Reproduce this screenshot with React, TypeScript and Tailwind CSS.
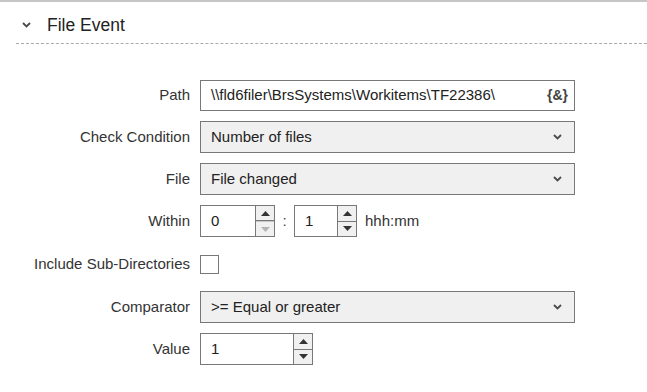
import { ReactNode } from "react";

function Chevron({ className = "" }: { className?: string }) {
  return (
    <svg width="9" height="6" viewBox="0 0 9 6" className={className}>
      <polyline points="1,1 4.5,4.5 8,1" fill="none" stroke="#4a4a4a" strokeWidth="1.8" />
    </svg>
  );
}

function Row({ label, children, tall }: { label: string; children: ReactNode; tall?: boolean }) {
  return (
    <div className={`flex items-center ${tall ? "h-[34px]" : "h-[32px]"}`}>
      <label className="w-[190px] text-right text-[15px] text-[#333]">{label}</label>
      <div className="ml-[10px] flex items-center">{children}</div>
    </div>
  );
}

function Select({ value }: { value: string }) {
  return (
    <div className="flex h-[32px] w-[375px] items-center justify-between border border-[#787878] bg-[#f0f0f0] pl-[10px] pr-[12px] text-[15px] text-[#222]">
      <span className="pt-px">{value}</span>
      <Chevron />
    </div>
  );
}

function Arrow({ up, muted }: { up?: boolean; muted?: boolean }) {
  return (
    <svg width="9" height="5" viewBox="0 0 9 5">
      <polygon points={up ? "0,5 4.5,0 9,5" : "0,0 4.5,5 9,0"} fill={muted ? "#b4b4b4" : "#333"} />
    </svg>
  );
}

function NumberBox({ value, width, downMuted }: { value: string; width: string; downMuted?: boolean }) {
  return (
    <div className={`flex h-[32px] border border-[#787878] bg-white ${width}`}>
      <span className="flex flex-1 items-center pl-[10px] text-[15px] text-[#222]">{value}</span>
      <div className="flex w-[19px] flex-col border-l border-[#787878] bg-[#f0f0f0]">
        <div className="flex flex-1 items-center justify-center border-b border-[#787878]">
          <Arrow up />
        </div>
        <div className={`flex flex-1 items-center justify-center ${downMuted ? "border-t border-[#c8c8c8]" : ""}`}>
          <Arrow muted={downMuted} />
        </div>
      </div>
    </div>
  );
}

export default function App() {
  return (
    <div className="h-[392px] w-[647px] overflow-hidden border-t-2 border-[#c6c6c6] bg-white font-['Liberation_Sans',Arial,sans-serif]">
      <div className="ml-4 flex h-[42px] items-center border-b border-dashed border-[#ababab] pt-[5px]">
        <Chevron className="ml-[6px]" />
        <h2 className="ml-4 text-[17.5px] text-[#222]">File Event</h2>
      </div>

      <div className="mt-[35px] flex flex-col gap-[10px]">
        <Row label="Path">
          <div className="flex h-[31px] w-[375px] items-center justify-between border border-[#787878] bg-white pl-[10px] pr-[6px] text-[15px] text-[#222]">
            <span>\\fld6filer\BrsSystems\Workitems\TF22386\</span>
            <span className="text-[14px] font-bold text-[#444]">{"{&}"}</span>
          </div>
        </Row>
        <Row label="Check Condition">
          <Select value="Number of files" />
        </Row>
        <Row label="File">
          <Select value="File changed" />
        </Row>
        <Row label="Within">
          <NumberBox value="0" width="w-[75px]" downMuted />
          <span className="w-[19px] text-center text-[15px] text-[#444]">:</span>
          <NumberBox value="1" width="w-[63px]" />
          <span className="ml-[8px] text-[15px] text-[#333]">hhh:mm</span>
        </Row>
        <Row label="Include Sub-Directories" tall>
          <div className="h-[19px] w-[19px] border border-[#787878] bg-white" />
        </Row>
        <Row label="Comparator">
          <Select value=">= Equal or greater" />
        </Row>
        <Row label="Value">
          <NumberBox value="1" width="w-[113px]" />
        </Row>
      </div>
    </div>
  );
}
